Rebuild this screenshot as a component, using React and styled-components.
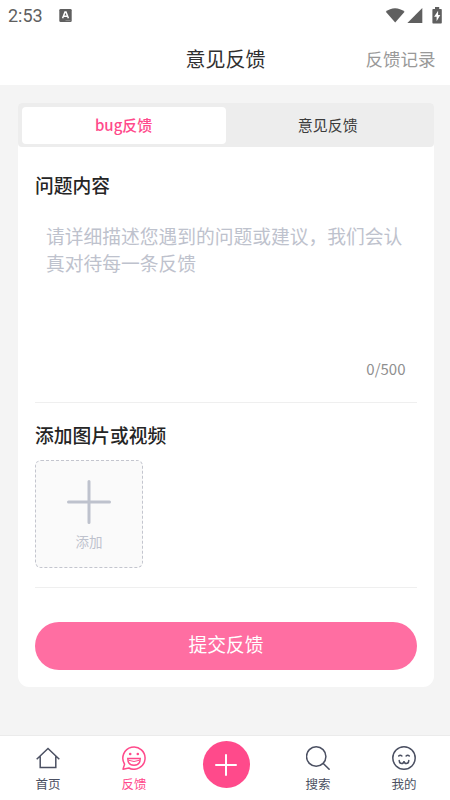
import { useState } from "react";
import styled, { createGlobalStyle } from "styled-components";

const GlobalStyle = createGlobalStyle`
  * {
    box-sizing: border-box;
  }

  body {
    margin: 0;
    background: #f4f4f4;
    font-family: "Noto Sans CJK SC", sans-serif;
    color: #2b2b2b;
  }

  button,
  textarea {
    font-family: inherit;
    border: none;
    padding: 0;
    margin: 0;
  }
`;

const Page = styled.div`
  width: 100%;
  height: 100vh;
  display: flex;
  flex-direction: column;
`;

const StatusBar = styled.div`
  height: 31px;
  padding: 0 8px;
  background: #fff;
  display: flex;
  align-items: center;
  justify-content: space-between;
`;

const StatusLeft = styled.div`
  display: flex;
  align-items: center;
  gap: 16px;
`;

const StatusRight = styled.div`
  display: flex;
  align-items: center;
`;

const Clock = styled.span`
  font-family: Roboto, sans-serif;
  font-size: 18px;
  line-height: 31px;
  color: #5f5f5f;
`;

const Header = styled.header`
  height: 54px;
  padding: 2px 14.5px 0 15.5px;
  background: #fff;
  display: grid;
  grid-template-columns: 1fr auto 1fr;
  align-items: center;
`;

const Title = styled.h1`
  grid-column: 2;
  margin: 0;
  font-size: 20px;
  line-height: 28px;
  font-weight: 400;
  color: #303030;
`;

const HistoryLink = styled.a`
  justify-self: end;
  font-size: 17.5px;
  line-height: 26px;
  color: #999;
`;

const Main = styled.main`
  flex: 1;
  padding: 18px 16px 0 17.5px;
`;

const Card = styled.section`
  height: 584px;
  background: #fff;
  border-radius: 4px 4px 11px 11px;
`;

const Tabs = styled.div`
  display: flex;
  height: 44px;
  padding: 4px 4px 3px;
  background: #ededed;
  border-radius: 4px;
`;

const Tab = styled.button`
  flex: 1;
  padding-bottom: 1px;
  border-radius: 4px;
  font-size: 15px;
  line-height: 36px;
  font-weight: ${({ $active }) => ($active ? 500 : 400)};
  color: ${({ $active }) => ($active ? "#ff4a8b" : "#3c3c3c")};
  background: ${({ $active }) => ($active ? "#fff" : "transparent")};
`;

const Form = styled.div`
  padding: 24px 17px 0 17.5px;
`;

const SectionTitle = styled.h2`
  margin: 0;
  font-size: 18.75px;
  line-height: 28px;
  font-weight: 500;
  color: #252525;
`;

const ContentInput = styled.textarea`
  display: block;
  width: 100%;
  height: 151px;
  margin-top: 23px;
  padding: 0 11px;
  resize: none;
  outline: none;
  background: transparent;
  font-size: 18.75px;
  line-height: 27px;

  &::placeholder {
    color: #bec2cd;
    opacity: 1;
  }
`;

const Counter = styled.div`
  padding: 0 11.5px 21px 0;
  margin-top: -16px;
  text-align: right;
  font-size: 15px;
  line-height: 24px;
  color: #8f8f8f;
`;

const Divider = styled.div`
  height: 1px;
  background: #efefef;
`;

const UploadTitle = styled(SectionTitle)`
  margin-top: 18px;
`;

const UploadButton = styled.button`
  width: 108px;
  height: 108px;
  margin: 11px 0 19px;
  padding-top: 2px;
  display: flex;
  flex-direction: column;
  align-items: center;
  justify-content: center;
  gap: 7px;
  background: #fafafa;
  border: 1px dashed #c3c5ce;
  border-radius: 6px;
  font-size: 13.5px;
  line-height: 20px;
  color: #bec2cd;
`;

const SubmitButton = styled.button`
  display: block;
  width: 100%;
  height: 48px;
  margin-top: 34px;
  padding-bottom: 4px;
  border-radius: 24px;
  background: #ff6ea2;
  font-size: 18.75px;
  line-height: 28px;
  color: #fff;
`;

const NavBar = styled.nav`
  height: 65px;
  padding: 0 3px 0 5px;
  display: grid;
  grid-template-columns: 1fr 1fr 98px 1fr 1fr;
  background: #fff;
  border-top: 1px solid #ebebeb;
`;

const NavItem = styled.a`
  padding-top: 10px;
  display: flex;
  flex-direction: column;
  align-items: center;
  gap: 4px;
  font-size: 12.5px;
  line-height: 20px;
  color: ${({ $active }) => ($active ? "#ff4a8b" : "#4b5062")};
`;

const PublishButton = styled.button`
  justify-self: center;
  width: 47px;
  height: 47px;
  margin-top: 5px;
  display: flex;
  align-items: center;
  justify-content: center;
  border-radius: 50%;
  background: #ff4a8b;
`;

const LineIcon = styled.svg`
  display: block;
  flex: none;
  fill: none;
  stroke: currentColor;
  stroke-width: ${({ $weight }) => $weight || 1.5};
`;

const KeyboardIcon = () => (
  <svg width="13" height="13" viewBox="0 0 13 13">
    <rect x="0.3" y="0" width="12.4" height="13" rx="1.3" fill="#5f5f5f" />
    <path d="M3.6 9.3 6 3h1l2.4 6.3M4.6 7.3h3.8" fill="none" stroke="#fff" strokeWidth="1.5" />
    <path d="M6.5 11.6h5" stroke="#aaa" strokeWidth="0.6" />
  </svg>
);

const SignalIcons = () => (
  <svg width="57" height="18" viewBox="0 0 57 18">
    <g fill="#5f5f5f">
      <path d="M0.8 4.8C6-0.1 14-0.1 19.6 4.8L10.2 15.6Z" />
      <path d="M37.3 .9v15H22.4Z" />
      <path d="M50 0h4.2v1.9h1.6c.6 0 1 .4 1 1v12.6c0 .6-.4 1-1 1h-7.4c-.6 0-1-.4-1-1V2.9c0-.6.4-1 1-1H50Z" />
    </g>
    <path d="m53.1 3.8-4 6h2.5v4.5l3.7-6.3h-2.2Z" fill="#fff" />
  </svg>
);

const HomeIcon = () => (
  <LineIcon width="24" height="24" viewBox="0 0 24 24">
    <path d="M.7 13.3 12 2.5l11.3 10.8M4.2 10.4v11.2h15.6V10.4" />
  </LineIcon>
);

const FeedbackIcon = () => (
  <LineIcon width="24" height="24" viewBox="0 0 24 24">
    <path d="M2.6 18.1A11.1 11.1 0 1 1 6.9 22L1 23.2Z" strokeLinejoin="round" />
    <path d="M5.8 12.4h12.4c0 4.8-2.5 6.9-6.2 6.9s-6.2-2.1-6.2-6.9Z" />
    <path d="M6.4 14.2q5.6 2.6 11.2 0" strokeWidth="1" />
    <circle cx="8.2" cy="8" r="1.3" fill="currentColor" stroke="none" />
    <circle cx="15.8" cy="8" r="1.3" fill="currentColor" stroke="none" />
  </LineIcon>
);

const SearchIcon = () => (
  <LineIcon width="24" height="24" viewBox="0 0 24 24">
    <circle cx="10.2" cy="10.5" r="9.7" />
    <path d="m17 17.3 6.6 6.4" />
  </LineIcon>
);

const ProfileIcon = () => (
  <LineIcon width="24" height="24" viewBox="0 0 24 24">
    <circle cx="12" cy="12" r="11.2" />
    <g strokeLinecap="round">
      <path d="M6.7 10q1.5-1.7 3.2 0M14.1 10q1.6-1.7 3.2 0" />
      <path d="M7.2 14.6c0 3.8 4.8 3.8 4.8.3 0 3.5 4.8 3.5 4.8-.3" />
    </g>
  </LineIcon>
);

const PlusIcon = ({ size, weight, color }) => (
  <LineIcon width={size} height={size} viewBox={`0 0 ${size} ${size}`} color={color} $weight={weight}>
    <path
      d={`M${size / 2} ${weight / 2}V${size - weight / 2}M${weight / 2} ${size / 2}H${size - weight / 2}`}
      strokeLinecap="round"
    />
  </LineIcon>
);

const App = () => {
  const [tab, setTab] = useState("bug");
  const [content, setContent] = useState("");

  return (
    <Page>
      <GlobalStyle />
      <StatusBar>
        <StatusLeft>
          <Clock>2:53</Clock>
          <KeyboardIcon />
        </StatusLeft>
        <StatusRight>
          <SignalIcons />
        </StatusRight>
      </StatusBar>

      <Header>
        <Title>意见反馈</Title>
        <HistoryLink>反馈记录</HistoryLink>
      </Header>

      <Main>
        <Card>
          <Tabs>
            <Tab $active={tab === "bug"} onClick={() => setTab("bug")}>
              bug反馈
            </Tab>
            <Tab $active={tab === "idea"} onClick={() => setTab("idea")}>
              意见反馈
            </Tab>
          </Tabs>

          <Form>
            <SectionTitle>问题内容</SectionTitle>
            <ContentInput
              value={content}
              maxLength={500}
              onChange={(e) => setContent(e.target.value)}
              placeholder="请详细描述您遇到的问题或建议，我们会认真对待每一条反馈"
            />
            <Counter>{content.length}/500</Counter>
            <Divider />

            <UploadTitle>添加图片或视频</UploadTitle>
            <UploadButton>
              <PlusIcon size={44} weight={3} />
              添加
            </UploadButton>
            <Divider />

            <SubmitButton>提交反馈</SubmitButton>
          </Form>
        </Card>
      </Main>

      <NavBar>
        <NavItem>
          <HomeIcon />
          首页
        </NavItem>
        <NavItem $active>
          <FeedbackIcon />
          反馈
        </NavItem>
        <PublishButton>
          <PlusIcon size={22} weight={2} color="#fff" />
        </PublishButton>
        <NavItem>
          <SearchIcon />
          搜索
        </NavItem>
        <NavItem>
          <ProfileIcon />
          我的
        </NavItem>
      </NavBar>
    </Page>
  );
};

export default App;
